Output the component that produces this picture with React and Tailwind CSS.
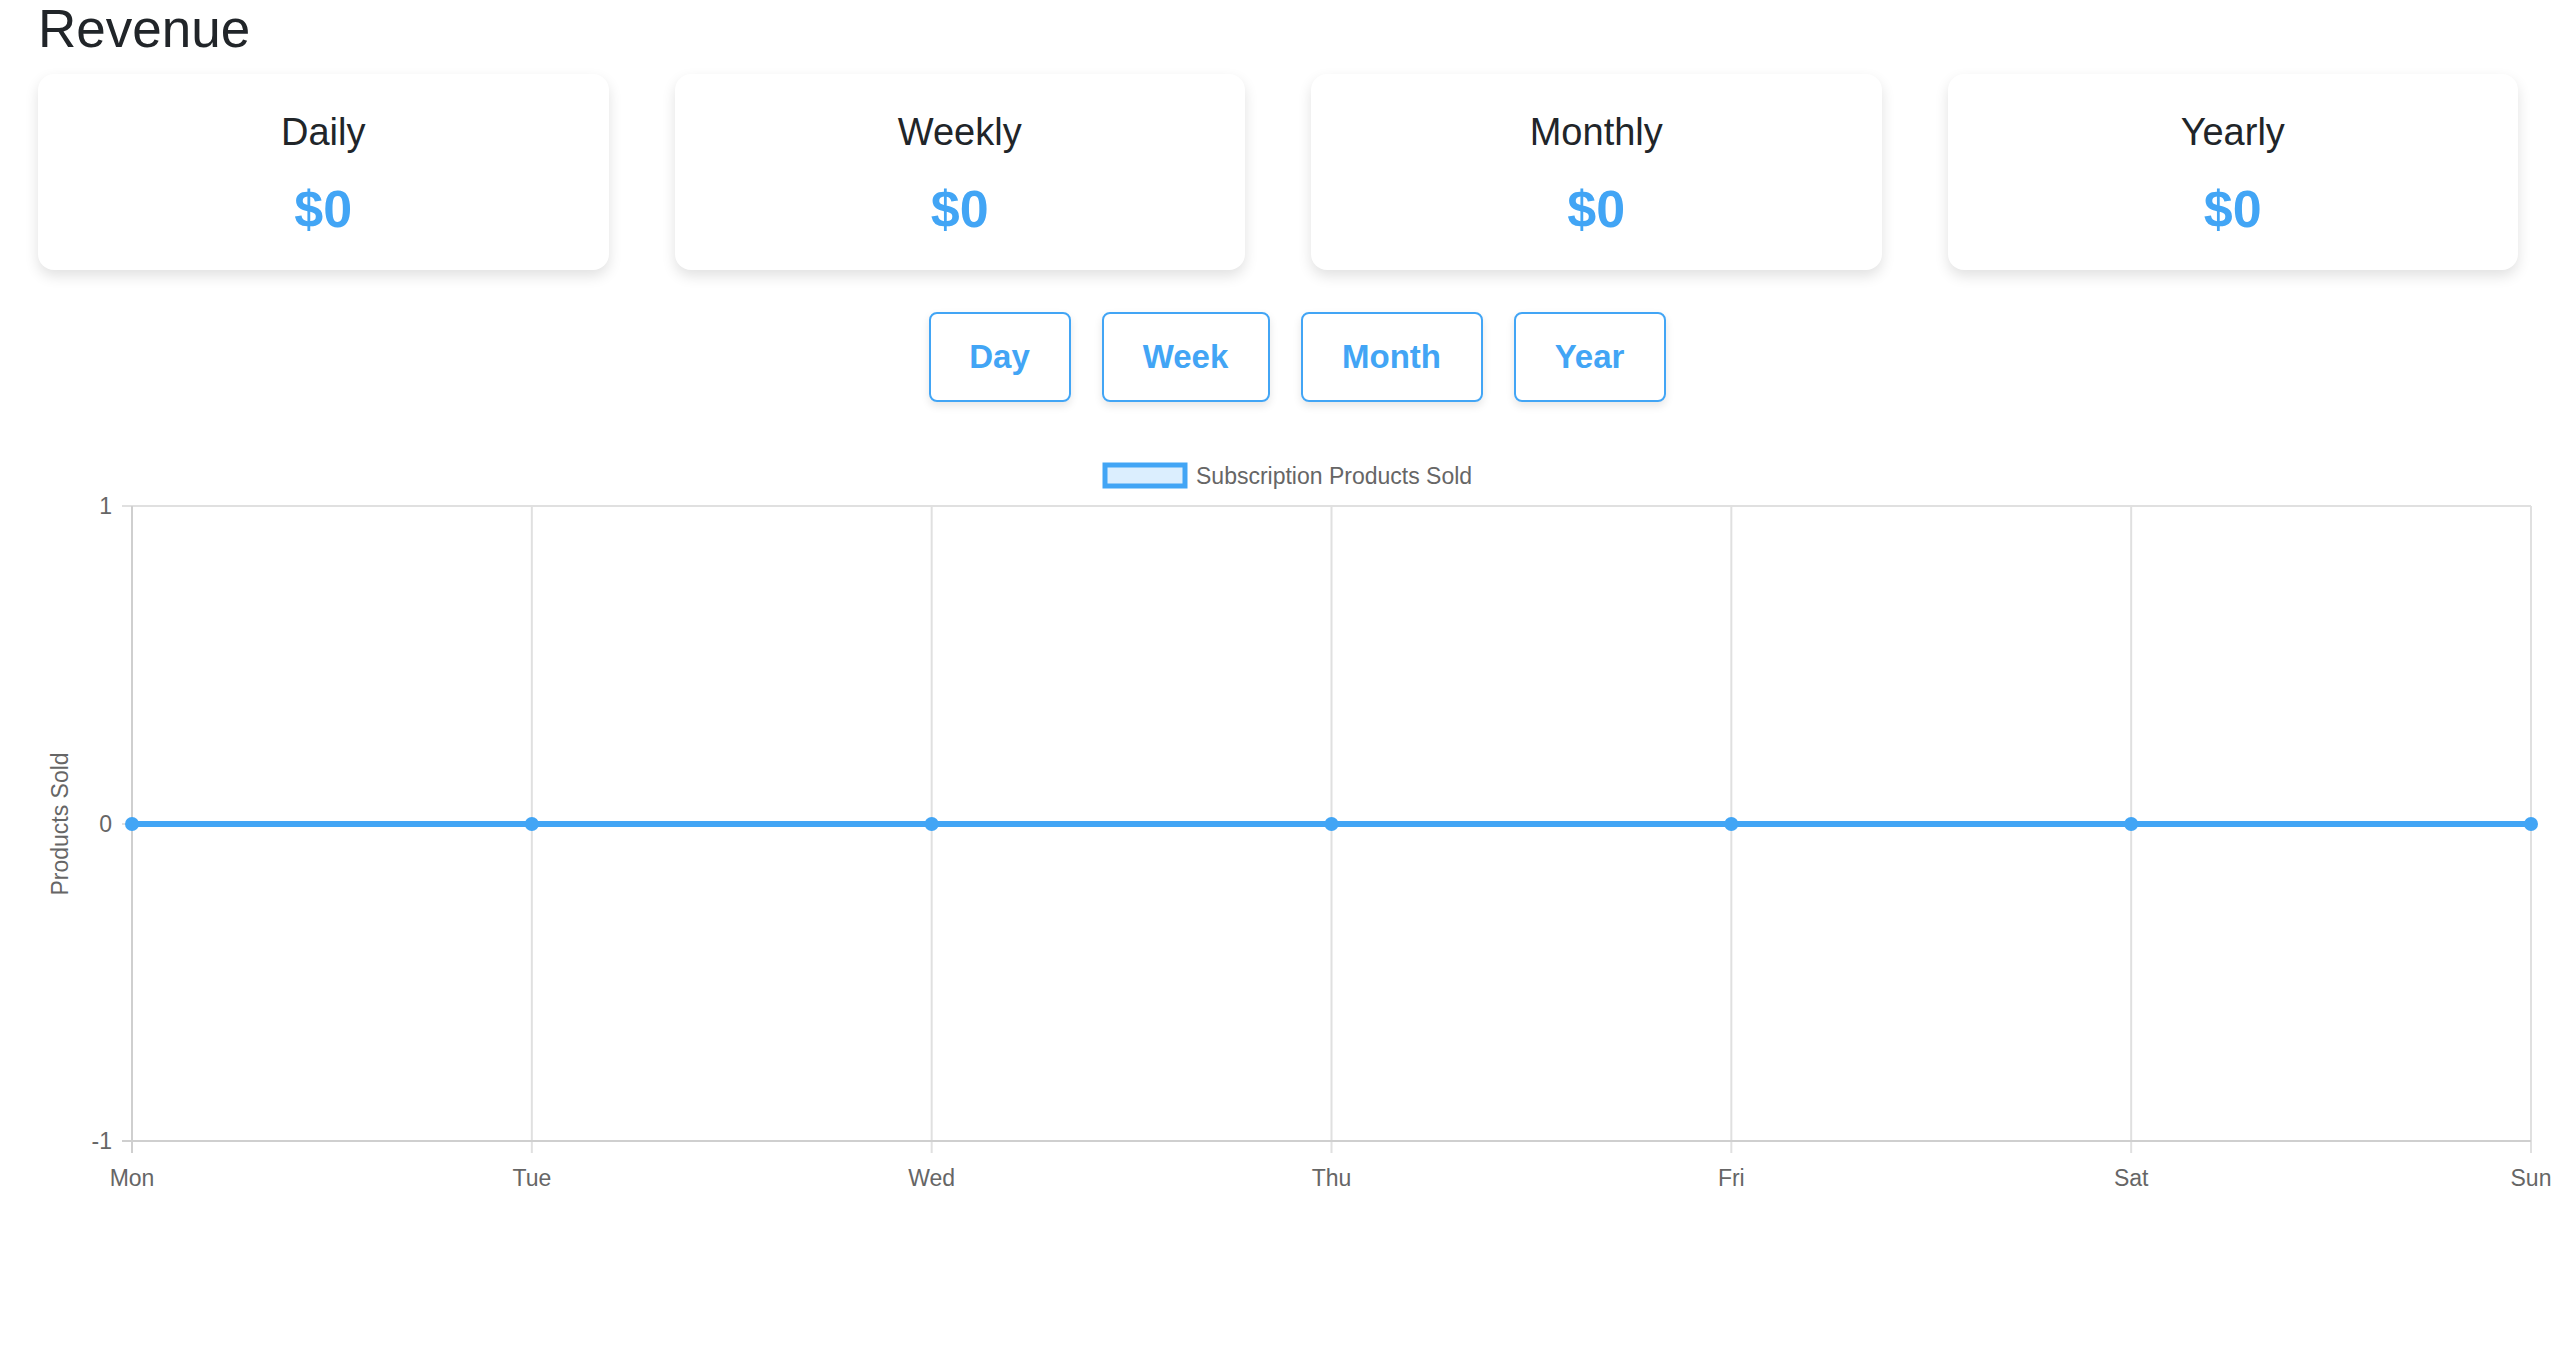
export default function App() {
  const cards = ["Daily", "Weekly", "Monthly", "Yearly"];
  const btns = [["Day", "w-[142px]"], ["Week", "w-[168px]"], ["Month", "w-[182px]"], ["Year", "w-[152px]"]];
  const L = 132, R = 2531, step = (R - L) / 6;
  const days = ["Mon", "Tue", "Wed", "Thu", "Fri", "Sat", "Sun"];
  const font = "'Liberation Sans', Arial, sans-serif";
  return (
    <div className="w-[2554px] h-[1370px] bg-white overflow-hidden text-[#212529]" style={{ fontFamily: font }}>
      <h1 className="pl-[38px] text-[53px] leading-none pt-[2px] h-[50px]">Revenue</h1>
      <div className="flex gap-[66px] pl-[38px] pr-[36px] mt-[24px]">
        {cards.map((c) => (
          <div key={c} className="flex-1 h-[196px] bg-white rounded-[16px] shadow-[0_6px_14px_rgba(0,0,0,0.12)] flex flex-col items-center">
            <div className="text-[38px] mt-[39px] leading-none">{c}</div>
            <div className="text-[52px] font-bold text-[#42a5f5] mt-[32px] leading-none">$0</div>
          </div>
        ))}
      </div>
      <div className="flex justify-center gap-[31px] mt-[42px] pl-[40px]">
        {btns.map(([b, w]) => (
          <div key={b} className={`${w} h-[90px] border-2 border-[#42a5f5] rounded-[8px] flex items-center justify-center text-[33px] font-bold text-[#42a5f5] shadow-[0_4px_8px_rgba(0,0,0,0.1)]`}>{b}</div>
        ))}
      </div>
      <svg width="2554" height="800" className="block mt-[39px]" style={{ fontFamily: font }}>
        <rect x="1105" y="24" width="80" height="21" fill="#dbeefe" stroke="#42a5f5" strokeWidth="5" />
        <text x="1196" y="43" fontSize="23" fill="#666">Subscription Products Sold</text>
        {days.map((d, i) => (
          <g key={d}>
            <line x1={L + i * step} y1="65" x2={L + i * step} y2="712" stroke="#e0e0e0" strokeWidth="2" />
            <text x={L + i * step} y="745" fontSize="23" fill="#666" textAnchor="middle">{d}</text>
          </g>
        ))}
        {[65, 383, 700].map((y, i) => (
          <g key={y}>
            <line x1="122" y1={y} x2={R} y2={y} stroke="#e0e0e0" strokeWidth="2" />
            <text x="112" y={y + 8} fontSize="23" fill="#666" textAnchor="end">{["1", "0", "-1"][i]}</text>
          </g>
        ))}
        <line x1={L} y1="65" x2={L} y2="712" stroke="#cfcfcf" strokeWidth="2" />
        <line x1="122" y1="700" x2={R} y2="700" stroke="#cfcfcf" strokeWidth="2" />
        <text transform="translate(68 383) rotate(-90)" fontSize="23" fill="#666" textAnchor="middle">Products Sold</text>
        <line x1={L} y1="383" x2={R} y2="383" stroke="#42a5f5" strokeWidth="6" />
        {days.map((d, i) => (
          <circle key={d} cx={L + i * step} cy="383" r="7" fill="#42a5f5" />
        ))}
      </svg>
    </div>
  );
}
